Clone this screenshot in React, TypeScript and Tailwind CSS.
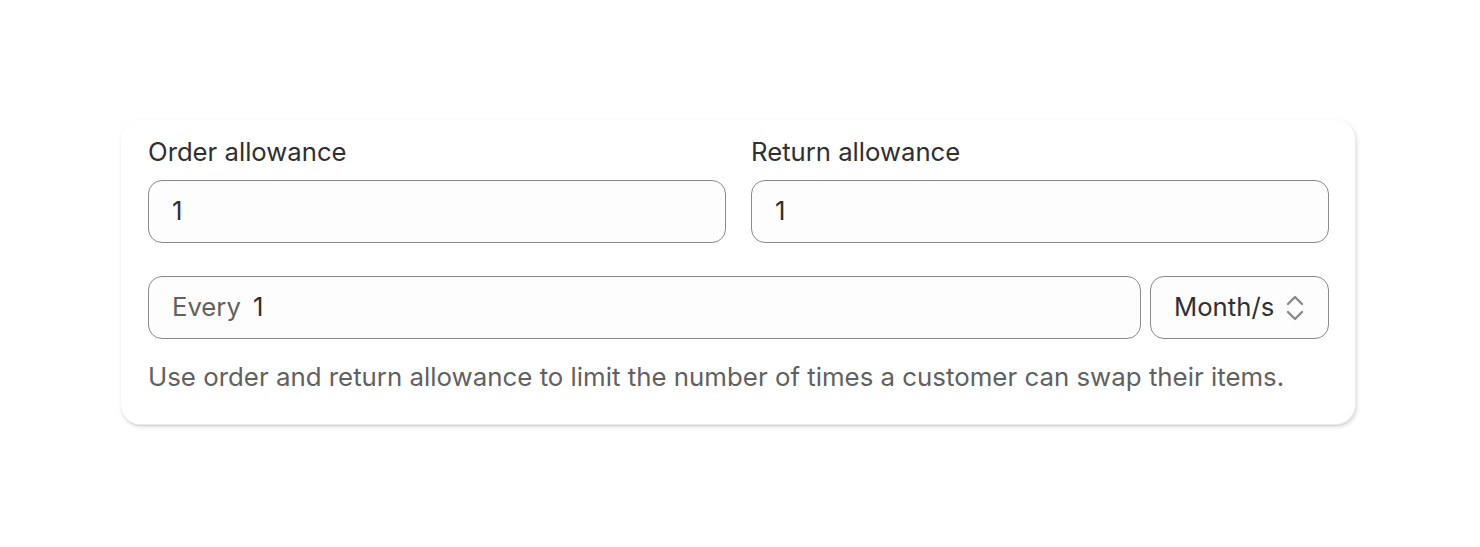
import React from "react";

export default function App() {
  return (
    <div className="min-h-[547px] bg-white pt-[120px]" style={{ fontFamily: "Inter, 'Noto Sans', sans-serif" }}>
      <div className="mx-[121px] w-[1235px] rounded-[20px] bg-white px-[27px] pt-[17px] pb-[33px] shadow-[0_1px_0_0_rgba(26,26,26,0.07),1px_2px_4px_rgba(0,0,0,0.14),inset_-1px_-1px_0_rgba(0,0,0,0.08)]">
        <div className="grid grid-cols-2 gap-[25px]">
          <div className="flex flex-col">
            <label className="text-[25.7px] leading-[28px] text-[#303030] pb-[14px] pt-[1px]">Order allowance</label>
            <div className="flex h-[63px] items-center rounded-[14px] border border-[#8a8a8a] bg-[#fdfdfd] px-[23px] text-[25.7px] text-[#303030]">1</div>
          </div>
          <div className="flex flex-col">
            <label className="text-[25.7px] leading-[28px] text-[#303030] pb-[14px] pt-[1px]">Return allowance</label>
            <div className="flex h-[63px] items-center rounded-[14px] border border-[#8a8a8a] bg-[#fdfdfd] px-[23px] text-[25.7px] text-[#303030]">1</div>
          </div>
        </div>
        <div className="mt-[33px] flex gap-[9px]">
          <div className="flex h-[63px] flex-1 items-center rounded-[14px] border border-[#8a8a8a] bg-[#fdfdfd] px-[23px] text-[25.7px]">
            <span className="text-[#616161]">Every</span>
            <span className="ml-[12px] text-[#303030]">1</span>
          </div>
          <div className="flex h-[63px] w-[179px] items-center rounded-[14px] border border-[#8a8a8a] bg-[#fdfdfd] pl-[23px] text-[25.7px] text-[#303030]">
            <span>Month/s</span>
            <svg className="ml-[11px]" width="20" height="28" viewBox="0 0 20 28" fill="none" stroke="#8a8a8a" strokeWidth="2.4" strokeLinecap="round" strokeLinejoin="round">
              <path d="M3 10 L10 3 L17 10" />
              <path d="M3 18 L10 25 L17 18" />
            </svg>
          </div>
        </div>
        <p className="mt-[23px] text-[25.85px] leading-[30px] text-[#616161]">Use order and return allowance to limit the number of times a customer can swap their items.</p>
      </div>
    </div>
  );
}
